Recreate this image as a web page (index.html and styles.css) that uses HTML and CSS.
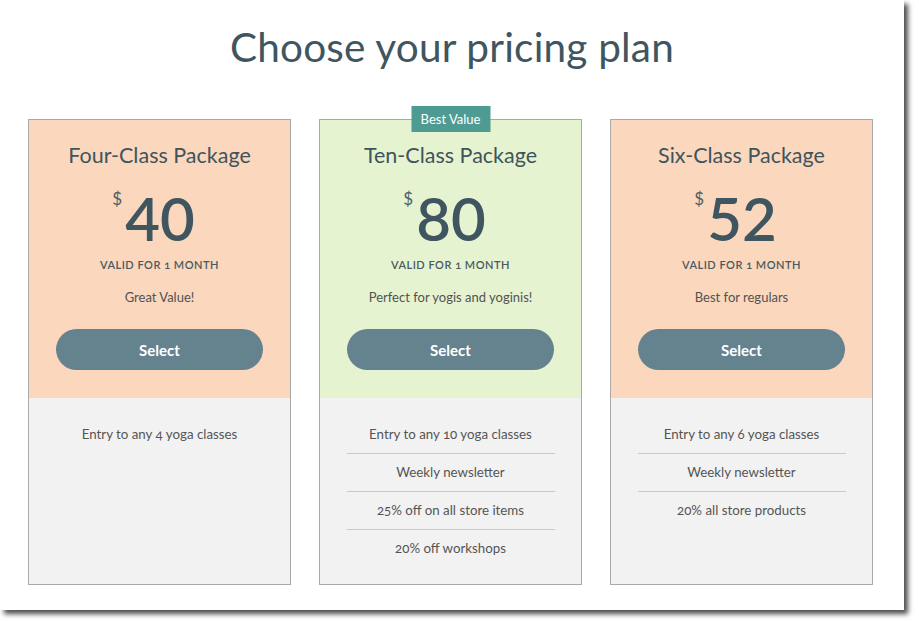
FILE: index.html
```html
<!DOCTYPE html>
<html>
<head>
<meta charset="utf-8">
<link rel="stylesheet" href="styles.css">
</head>
<body>
<div class="frame">
  <h1 class="title">Choose your pricing plan</h1>
  <div class="plans">
    <div class="card peach">
      <div class="top">
        <h2 class="name">Four-Class Package</h2>
        <div class="price"><span class="cur">$</span><span class="amount">40</span></div>
        <div class="valid">Valid for 1 month</div>
        <p class="desc">Great Value!</p>
        <button class="select">Select</button>
      </div>
      <ul class="features">
        <li>Entry to any 4 yoga classes</li>
      </ul>
    </div>
    <div class="card green">
      <div class="badge">Best Value</div>
      <div class="top">
        <h2 class="name">Ten-Class Package</h2>
        <div class="price"><span class="cur">$</span><span class="amount">80</span></div>
        <div class="valid">Valid for 1 month</div>
        <p class="desc">Perfect for yogis and yoginis!</p>
        <button class="select">Select</button>
      </div>
      <ul class="features">
        <li>Entry to any 10 yoga classes</li>
        <li>Weekly newsletter</li>
        <li>25% off on all store items</li>
        <li>20% off workshops</li>
      </ul>
    </div>
    <div class="card peach">
      <div class="top">
        <h2 class="name">Six-Class Package</h2>
        <div class="price"><span class="cur">$</span><span class="amount">52</span></div>
        <div class="valid">Valid for 1 month</div>
        <p class="desc">Best for regulars</p>
        <button class="select">Select</button>
      </div>
      <ul class="features">
        <li>Entry to any 6 yoga classes</li>
        <li>Weekly newsletter</li>
        <li>20% all store products</li>
      </ul>
    </div>
  </div>
</div>
</body>
</html>
```
FILE: styles.css
```css
* { box-sizing: border-box; }
html, body { margin: 0; padding: 0; background: #fff; }
body { font-family: "Lato", "Open Sans", sans-serif; color: #3e545d; min-height: 626px; }

.frame {
  width: 904px;
  height: 610px;
  background: #fff;
  box-shadow: 4px 4px 5px rgba(0, 0, 0, 0.7);
  padding-top: 24px;
}

.title {
  margin: 0;
  text-align: center;
  font-size: 40.5px;
  font-weight: 400;
  line-height: 46px;
  color: #3f5560;
  letter-spacing: 0.2px;
}

.plans {
  display: flex;
  gap: 28px;
  padding-left: 28px;
  margin-top: 49px;
}

.card {
  position: relative;
  width: 263px;
  height: 466px;
  border: 1px solid #a9a9a9;
  background: #f2f2f2;
  display: flex;
  flex-direction: column;
}

.top {
  height: 278px;
  display: flex;
  flex-direction: column;
  align-items: center;
  padding-top: 23px;
}
.peach .top { background: #fad7bd; }
.green .top { background: #e6f3d1; }

.badge {
  position: absolute;
  top: -14px;
  left: 50%;
  transform: translateX(-50%);
  width: 79px;
  height: 26px;
  background: #4e9b93;
  color: #fff;
  font-size: 13px;
  line-height: 26px;
  text-align: center;
}

.name {
  margin: 0;
  font-size: 21.5px;
  font-weight: 400;
  line-height: 24px;
  color: #3e545d;
}

.price {
  display: flex;
  align-items: flex-start;
  margin-top: 21px;
  height: 58px;
  margin-left: -12px;
}
.cur {
  font-size: 17px;
  line-height: 20px;
  margin-right: 3px;
  margin-top: 1px;
  color: #4a5f68;
}
.amount {
  font-size: 60px;
  line-height: 58px;
  font-weight: 600;
  color: #3f5560;
  margin-top: 1px;
}

.valid {
  margin-top: 12px;
  font-size: 11px;
  line-height: 14px;
  text-transform: uppercase;
  letter-spacing: 0.5px;
  font-weight: 600;
  color: #4a5a60;
  font-variant-numeric: oldstyle-nums;
}

.desc {
  margin: 17px 0 0;
  font-size: 13px;
  line-height: 16px;
  color: #525252;
}

.select {
  margin-top: 24px;
  width: 207px;
  height: 41px;
  border: 0;
  border-radius: 21px;
  background: #64838f;
  color: #fff;
  font-family: inherit;
  font-size: 15px;
  font-weight: 700;
  cursor: pointer;
}

.features {
  list-style: none;
  margin: 0 auto;
  padding: 18px 0 0;
  width: 208px;
}
.features li {
  height: 38px;
  line-height: 37px;
  text-align: center;
  font-size: 13.3px;
  color: #555;
  border-bottom: 1px solid #c9c9c9;
  font-variant-numeric: oldstyle-nums;
}
.features li:last-child { border-bottom: 0; }
```
